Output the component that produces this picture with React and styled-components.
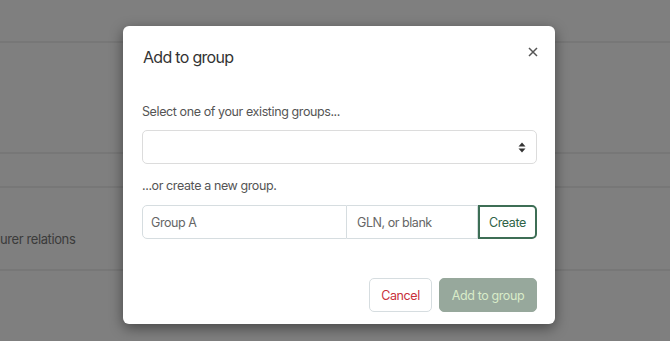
import React from 'react'
import styled, { createGlobalStyle } from 'styled-components'

const Global = createGlobalStyle`
  html, body { margin: 0; padding: 0; }
  body {
    font-family: Inter, "Noto Sans", sans-serif;
    background: #fff;
    overflow: hidden;
  }
  * { box-sizing: border-box; }
`

const Page = styled.div`
  position: relative;
  width: 670px;
  height: 341px;
  background: #ffffff;
  overflow: hidden;
`

const Table = styled.div`
  display: flex;
  flex-direction: column;
`

const Row = styled.div`
  height: ${p => p.h}px;
  border-bottom: 2px solid #eeeeee;
  padding-top: ${p => p.pt || 0}px;
  font-size: 13px;
  line-height: 16px;
  letter-spacing: -0.4px;
  color: #777;
`

const Backdrop = styled.div`
  position: absolute;
  inset: 0;
  background: rgba(0, 0, 0, 0.5);
  display: flex;
  justify-content: center;
  padding: 26px 0 0 8px;
`

const Modal = styled.div`
  width: 432px;
  height: 298px;
  background: #fff;
  border-radius: 6px;
  box-shadow: 0 4px 14px rgba(0, 0, 0, 0.45);
  padding: 0 18px 0 19px;
  display: flex;
  flex-direction: column;
`

const Header = styled.div`
  height: 76px;
  display: flex;
  align-items: flex-start;
  justify-content: space-between;
  padding-top: 20px;
`

const Title = styled.h4`
  margin: 0 0 0 1px;
  font-size: 16px;
  font-weight: 400;
  line-height: 22px;
  letter-spacing: -0.7px;
  color: #333;
`

const Close = styled.button`
  border: 0;
  background: none;
  padding: 0;
  margin: -2px -4px 0 0;
  width: 16px;
  height: 16px;
  display: flex;
  align-items: center;
  justify-content: center;
  cursor: pointer;
`

const Body = styled.div`
  display: flex;
  flex-direction: column;
`

const Label = styled.div`
  font-size: 12.5px;
  letter-spacing: -0.4px;
  color: #555;
  line-height: 20px;
  margin: ${p => p.m};
`

const SelectBox = styled.div`
  height: 34px;
  border: 1px solid #dcdcdc;
  border-radius: 5px;
  display: flex;
  align-items: center;
  justify-content: flex-end;
  padding-right: 10px;
`

const Group = styled.div`
  display: flex;
  height: 34px;
`

const Input = styled.div`
  width: ${p => p.w}px;
  border: 1px solid #d6dde0;
  border-left-width: ${p => (p.first ? 1 : 0)}px;
  border-radius: ${p => (p.first ? '5px 0 0 5px' : '0')};
  display: flex;
  align-items: center;
  padding-left: ${p => (p.first ? 8 : 10)}px;
  font-size: 12.5px;
  letter-spacing: -0.45px;
  color: #666;
`

const CreateBtn = styled.button`
  flex: 1;
  border: 2px solid #3d6e55;
  border-radius: 0 5px 5px 0;
  background: #fff;
  color: #2e6347;
  font-family: inherit;
  font-size: 12.5px;
  letter-spacing: -0.4px;
  padding: 0;
`

const Footer = styled.div`
  margin-top: auto;
  margin-bottom: 12px;
  display: flex;
  justify-content: flex-end;
  gap: 7px;
`

const Btn = styled.button`
  height: 34px;
  width: ${p => p.w}px;
  border-radius: 5px;
  font-family: inherit;
  font-size: 12.5px;
  letter-spacing: -0.4px;
  padding: 0;
  border: 1px solid ${p => (p.primary ? '#97a89c' : '#d6dde0')};
  background: ${p => (p.primary ? '#97a89c' : '#fff')};
  color: ${p => (p.primary ? '#d9ecc9' : '#c8303a')};
`

const Arrows = () => (
  <svg width="8" height="11" viewBox="0 0 8 11">
    <path d="M4 0.5 L7.5 4.5 H0.5 Z" fill="#333" />
    <path d="M4 10.5 L7.5 6.5 H0.5 Z" fill="#333" />
  </svg>
)

const XIcon = () => (
  <svg width="10" height="10" viewBox="0 0 10 10">
    <path d="M1 1 L9 9 M9 1 L1 9" stroke="#555" strokeWidth="1.5" />
  </svg>
)

export default function App() {
  return (
    <Page>
      <Global />
      <Table>
        <Row h={43} />
        <Row h={111} />
        <Row h={34} />
        <Row h={83} pt={43}>urer relations</Row>
      </Table>
      <Backdrop>
        <Modal>
          <Header>
            <Title>Add to group</Title>
            <Close aria-label="Close"><XIcon /></Close>
          </Header>
          <Body>
            <Label m="0 0 8px">Select one of your existing groups...</Label>
            <SelectBox><Arrows /></SelectBox>
            <Label m="12px 0 9px">...or create a new group.</Label>
            <Group>
              <Input first w={205}>Group A</Input>
              <Input w={131}>GLN, or blank</Input>
              <CreateBtn>Create</CreateBtn>
            </Group>
          </Body>
          <Footer>
            <Btn w={63}>Cancel</Btn>
            <Btn primary w={98}>Add to group</Btn>
          </Footer>
        </Modal>
      </Backdrop>
    </Page>
  )
}
